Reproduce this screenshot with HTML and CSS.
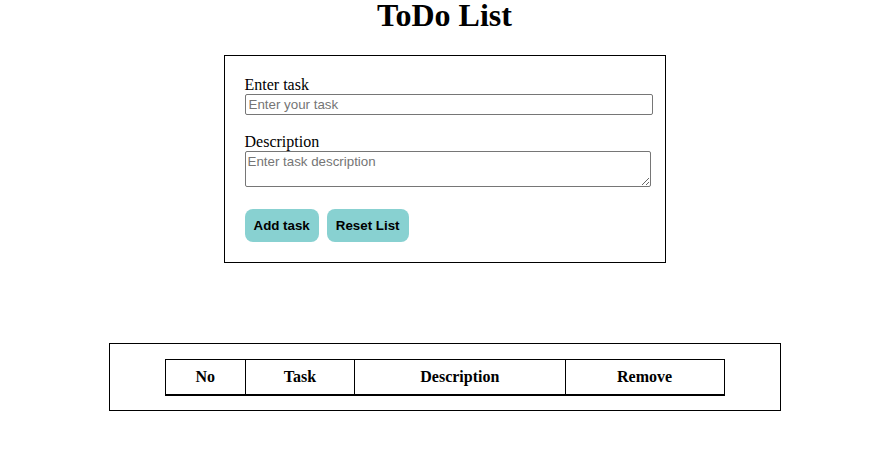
FILE: index.html
```html
<!DOCTYPE html>
<html>
<head>
<meta charset="utf-8">
<link rel="stylesheet" href="styles.css">
</head>
<body>
<h1 class="title">ToDo List</h1>
<form class="task-form">
  <label class="field-label" for="task">Enter task</label>
  <input class="task-input" id="task" type="text" placeholder="Enter your task">
  <label class="field-label gap-top" for="desc">Description</label>
  <textarea class="desc-input" id="desc" placeholder="Enter task description"></textarea>
  <div class="actions">
    <button type="button" class="btn">Add task</button>
    <button type="button" class="btn">Reset List</button>
  </div>
</form>
<div class="list-box">
  <table class="todo-table">
    <thead>
      <tr>
        <th class="c-no">No</th>
        <th class="c-task">Task</th>
        <th class="c-desc">Description</th>
        <th class="c-rem">Remove</th>
      </tr>
    </thead>
  </table>
</div>
</body>
</html>
```
FILE: styles.css
```css
html, body {
  background: #fff;
}
body {
  margin: 0 0 0 4px;
  font-family: "Liberation Serif", "Times New Roman", serif;
  font-size: 16px;
  color: #000;
}
.title {
  margin: 0;
  text-align: center;
  font-size: 32px;
  font-weight: bold;
  line-height: 28px;
  padding-top: 1px;
}
.task-form {
  width: 400px;
  margin: 26px auto 0;
  padding: 20px;
  border: 1px solid #000;
  display: flex;
  flex-direction: column;
  align-items: flex-start;
}
.field-label {
  display: block;
  line-height: 18px;
  height: 18px;
}
.gap-top {
  margin-top: 18px;
}
.task-input {
  width: 100%;
  box-sizing: content-box;
  margin: 0;
  height: 15px;
  border: 1px solid #767676;
  padding: 2px 3px;
  font-family: "Liberation Sans", Arial, sans-serif;
  font-size: 13.333px;
  border-radius: 2px;
}
.desc-input {
  width: 100%;
  box-sizing: content-box;
  margin: 0;
  height: 30px;
  padding: 2px;
  border: 1px solid #767676;
  border-radius: 2px;
  font-family: "Liberation Sans", Arial, sans-serif;
  font-size: 13.333px;
  resize: both;
}
.task-input::placeholder, .desc-input::placeholder {
  color: #757575;
}
.actions {
  display: flex;
  gap: 8px;
  margin-top: 22px;
}
.btn {
  height: 33px;
  padding: 0 9px;
  border: none;
  border-radius: 8px;
  background: #88d1d1;
  font-family: "Liberation Sans", Arial, sans-serif;
  font-weight: bold;
  font-size: 13.333px;
  color: #000;
}
.list-box {
  width: 670px;
  margin: 80px auto 0;
  border: 1px solid #000;
  padding: 15px 0 14px;
}
.todo-table {
  width: 560px;
  margin: 0 auto;
  border-collapse: collapse;
}
.todo-table th {
  border: 1px solid #000;
  border-bottom: 2px solid #000;
  height: 34px;
  padding: 0;
  font-weight: bold;
  font-size: 16px;
  text-align: center;
}
.c-no { width: 80px; }
.c-task { width: 109px; }
.c-desc { width: 211px; }
.c-rem { width: 159px; }
```
